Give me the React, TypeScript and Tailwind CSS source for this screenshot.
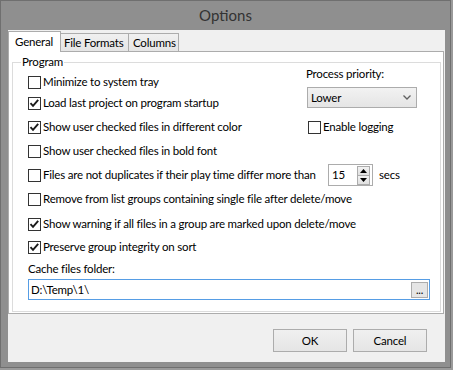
import React from "react";

function Check({ checked, className = "" }: { checked?: boolean; className?: string }) {
  return (
    <div className={"w-[13px] h-[13px] shrink-0 border border-[#333333] bg-white flex items-center justify-center " + className}>
      {checked && (
        <svg width="11" height="11" viewBox="0 0 11 11">
          <path d="M1.5 5.2 L4 7.8 L9.2 1.8" fill="none" stroke="#1a1a1a" strokeWidth="1.9" />
        </svg>
      )}
    </div>
  );
}

function Row({ checked, label, className = "" }: { checked?: boolean; label: string; className?: string }) {
  return (
    <div className={"h-4 flex items-center " + className}>
      <Check checked={checked} />
      <span className="ml-[2px] whitespace-nowrap leading-4">{label}</span>
    </div>
  );
}

export default function App() {
  return (
    <div className="w-[453px] h-[370px] bg-[#9a9a9a] font-['Lato',sans-serif] text-[11.5px] tracking-[-0.2px] text-black">
      <div className="w-[451px] h-[368px] bg-[#8f8f8f] border border-[#6f6f6f] flex flex-col">
        <div className="h-[29px] flex items-center justify-center text-[15px] tracking-normal text-[#333333]">Options</div>
        <div className="ml-[7px] w-[437px] h-[332px] bg-[#f0f0f0] flex flex-col">
          {/* tabs */}
          <div className="mt-[1px] h-[20px] flex items-end">
            <div className="w-[53px] h-[21px] -mb-[1px] bg-white border border-b-0 border-[#acacac] relative z-10 flex items-center pl-[6px] leading-4 whitespace-nowrap">
              General
            </div>
            <div className="w-[68px] h-[18px] border border-b-0 border-l-0 border-[#acacac] bg-gradient-to-b from-[#f0f0f0] to-[#e5e5e5] flex items-center pl-[3px] leading-4 whitespace-nowrap">
              File Formats
            </div>
            <div className="w-[50px] h-[18px] border border-b-0 border-l-0 border-[#acacac] bg-gradient-to-b from-[#f0f0f0] to-[#e5e5e5] flex items-center pl-[4px] leading-4 whitespace-nowrap">
              Columns
            </div>
          </div>
          {/* panel */}
          <div className="w-[436px] h-[263px] bg-white border border-[#acacac] flex flex-col">
            <div className="relative mt-[10px] ml-[3px] mr-[2px] h-[250px] border border-[#dcdcdc] flex flex-col pl-[15px]">
              <span className="absolute -top-[9px] left-[8px] bg-white px-[1px] leading-4">Program</span>
              {/* top section */}
              <div className="flex">
                <div className="w-[278px] shrink-0 pt-[11px] flex flex-col">
                  <Row label="Minimize to system tray" />
                  <Row checked label="Load last project on program startup" className="mt-[5px]" />
                  <Row checked label="Show user checked files in different color" className="mt-[8px]" />
                </div>
                <div className="pt-[3px] flex flex-col">
                  <div className="h-4 leading-4 whitespace-nowrap">Process priority:</div>
                  <div className="mt-[5px] ml-[1px] w-[110px] h-[21px] border border-[#acacac] bg-gradient-to-b from-[#f2f2f2] to-[#e5e5e5] flex items-center justify-between pl-[3px] pr-[5px]">
                    <span className="leading-4">Lower</span>
                    <svg width="8" height="5" viewBox="0 0 8 5">
                      <path d="M0.5 0.5 L4 4 L7.5 0.5" fill="none" stroke="#606060" strokeWidth="1.3" />
                    </svg>
                  </div>
                  <div className="mt-[11px] ml-[2px]">
                    <Row label="Enable logging" />
                  </div>
                </div>
              </div>
              <Row label="Show user checked files in bold font" className="mt-[8px]" />
              <div className="mt-[5px] h-[22px] flex items-center">
                <Check />
                <span className="ml-[2px] w-[285px] shrink-0 whitespace-nowrap leading-4">Files are not duplicates if their play time differ more than</span>
                <div className="w-[45px] h-[22px] shrink-0 border border-[#acacac] bg-white flex items-center justify-between pl-[3px] pr-[2px]">
                  <span className="leading-4">15</span>
                  <div className="flex flex-col w-[13px] h-[19px] border border-[#acacac]">
                    <div className="flex-1 bg-gradient-to-b from-[#f2f2f2] to-[#e0e0e0] border-b border-[#acacac] flex items-center justify-center">
                      <svg width="7" height="4" viewBox="0 0 7 4"><path d="M0 4 L3.5 0 L7 4 Z" fill="#000" /></svg>
                    </div>
                    <div className="flex-1 bg-gradient-to-b from-[#f2f2f2] to-[#e0e0e0] flex items-center justify-center">
                      <svg width="7" height="4" viewBox="0 0 7 4"><path d="M0 0 L3.5 4 L7 0 Z" fill="#000" /></svg>
                    </div>
                  </div>
                </div>
                <span className="ml-[6px] leading-4">secs</span>
              </div>
              <Row label="Remove from list groups containing single file after delete/move" className="mt-[5px]" />
              <Row checked label="Show warning if all files in a group are marked upon delete/move" className="mt-[9px]" />
              <Row checked label="Preserve group integrity on sort" className="mt-[7px]" />
              <div className="mt-[6px] h-4 leading-4">Cache files folder:</div>
              <div className="mt-[2px] w-[402px] h-[21px] border border-[#569de5] bg-white flex items-center justify-between pl-[2px] pr-[1px]">
                <span className="leading-4">D:\Temp\1\</span>
                <div className="w-[17px] h-[16px] border border-[#acacac] bg-[#e5e5e5] flex items-end justify-center leading-3 text-[11px] pb-[1px]">
                  ...
                </div>
              </div>
            </div>
          </div>
          {/* buttons */}
          <div className="mt-[15px] flex justify-end gap-[6px] pr-[18px]">
            <div className="w-[74px] h-[23px] border border-[#acacac] bg-gradient-to-b from-[#f0f0f0] to-[#e5e5e5] flex items-center justify-center leading-4">OK</div>
            <div className="w-[74px] h-[23px] border border-[#acacac] bg-gradient-to-b from-[#f0f0f0] to-[#e5e5e5] flex items-center justify-center leading-4">Cancel</div>
          </div>
        </div>
      </div>
    </div>
  );
}
